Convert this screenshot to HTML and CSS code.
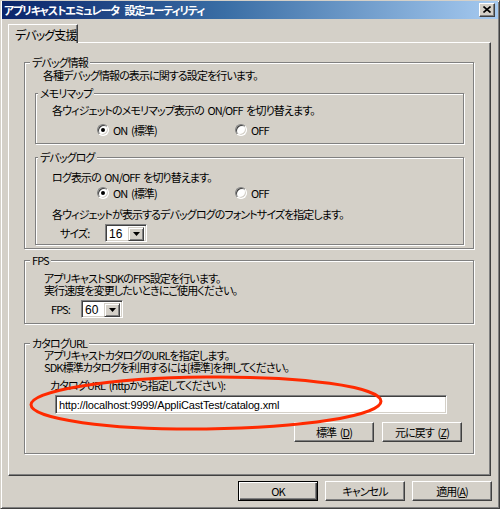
FILE: index.html
```html
<!DOCTYPE html>
<html lang="ja">
<head>
<meta charset="utf-8">
<title>アプリキャストエミュレータ 設定ユーティリティ</title>
<link rel="stylesheet" href="styles.css">
</head>
<body>
<div class="window">
  <div class="titlebar">
    <span class="title">アプリキャストエミュレータ 設定ユーティリティ</span>
    <span class="close"><svg width="8" height="7" viewBox="0 0 8 7"><path d="M0.5 0.5 L7.5 6.5 M7.5 0.5 L0.5 6.5" stroke="#000" stroke-width="1.6"/></svg></span>
  </div>
  <div class="client">
    <div class="tabs"><div class="tab">デバッグ支援</div></div>
    <div class="panel">
      <div class="group g-debug">
        <div class="legend lg-main">デバッグ情報</div>
        <div class="line desc">各種デバッグ情報の表示に関する設定を行います。</div>
        <div class="group sub g-mem">
          <div class="legend lg-sub">メモリマップ</div>
          <div class="line sub-text mem-text">各ウィジェットのメモリマップ表示の ON/OFF を切り替えます。</div>
          <div class="radios mem-radios">
            <div class="radio"><span class="rb checked"></span>ON (標準)</div>
            <div class="radio"><span class="rb"></span>OFF</div>
          </div>
        </div>
        <div class="group sub g-log">
          <div class="legend lg-sub">デバッグログ</div>
          <div class="line sub-text log-text">ログ表示の ON/OFF を切り替えます。</div>
          <div class="radios log-radios">
            <div class="radio"><span class="rb checked"></span>ON (標準)</div>
            <div class="radio"><span class="rb"></span>OFF</div>
          </div>
          <div class="line sub-text font-text">各ウィジェットが表示するデバッグログのフォントサイズを指定します。</div>
          <div class="field-row size-row">
            <span class="field-label size-label">サイズ:</span>
            <div class="combo"><span class="val">16</span><span class="drop"><svg width="7" height="4" viewBox="0 0 7 4"><path d="M0 0 H7 L3.5 4 Z" fill="#000"/></svg></span></div>
          </div>
        </div>
      </div>

      <div class="group g-fps">
        <div class="legend lg-main">FPS</div>
        <div class="line gtext first">アプリキャストSDKのFPS設定を行います。</div>
        <div class="line gtext">実行速度を変更したいときにご使用ください。</div>
        <div class="field-row fps-row">
          <span class="field-label fps-label">FPS:</span>
          <div class="combo"><span class="val">60</span><span class="drop"><svg width="7" height="4" viewBox="0 0 7 4"><path d="M0 0 H7 L3.5 4 Z" fill="#000"/></svg></span></div>
        </div>
      </div>

      <div class="group g-cat">
        <div class="legend lg-main">カタログURL</div>
        <div class="line gtext">アプリキャストカタログのURLを指定します。</div>
        <div class="line gtext">SDK標準カタログを利用するには[標準]を押してください。</div>
        <div class="line cat-label">カタログURL (httpから指定してください):</div>
        <div class="textbox">http://localhost:9999/AppliCastTest/catalog.xml</div>
        <div class="cat-buttons">
          <div class="btn">標準 (<u>D</u>)</div>
          <div class="btn">元に戻す (<u>Z</u>)</div>
        </div>
      </div>
    </div>
    <div class="dialog-buttons">
      <div class="btn default">OK</div>
      <div class="btn">キャンセル</div>
      <div class="btn">適用(<u>A</u>)</div>
    </div>
  </div>
  <svg class="mark" width="500" height="509" viewBox="0 0 500 509"><ellipse cx="206" cy="403" rx="175" ry="26" transform="rotate(-0.6 206 403)" fill="none" stroke="#ff2a00" stroke-width="3"/></svg>
</div>
</body>
</html>
```
FILE: styles.css
```css
html, body {
  margin: 0;
  padding: 0;
  background: #d4d0c8;
}
body {
  font-family: "Noto Sans CJK JP", "Noto Sans", sans-serif;
  font-size: 11px;
  line-height: 12px;
  letter-spacing: -0.9px;
  word-spacing: 2px;
  color: #000;
  font-feature-settings: "palt";
}
.window {
  position: relative;
  width: 500px;
  height: 509px;
  box-sizing: border-box;
  border: 1px solid;
  border-color: #d4d0c8 #404040 #404040 #d4d0c8;
  box-shadow: inset 1px 1px 0 #fff, inset -1px -1px 0 #808080;
  padding: 1px;
  background: #d4d0c8;
  overflow: hidden;
}
.titlebar {
  height: 18px;
  display: flex;
  align-items: center;
  justify-content: space-between;
  padding: 0 2px 0 2px;
  margin-top: -1px;
  background: linear-gradient(to right, #0a246a 0%, #3a6ea5 45%, #a6caf0 100%);
}
.title {
  color: #fff;
  font-weight: bold;
  font-size: 11px;
  letter-spacing: -1.1px;
  word-spacing: 4px;
  white-space: nowrap;
}
.close {
  width: 16px;
  height: 14px;
  box-sizing: border-box;
  background: #d4d0c8;
  border: 1px solid;
  border-color: #fff #404040 #404040 #fff;
  box-shadow: inset -1px -1px 0 #808080;
  display: flex;
  align-items: center;
  justify-content: center;
  padding: 0 1px 1px 0;
  margin-right: 1px;
}
.client {
  padding: 5px 7px 0 6px;
}
.tabs {
  display: flex;
  height: 18px;
  position: relative;
  z-index: 1;
}
.tab {
  width: 70px;
  height: 19px;
  box-sizing: border-box;
  border: 1px solid;
  border-bottom: none;
  border-color: #fff #404040 #fff #fff;
  box-shadow: inset -1px 0 0 #808080;
  background: #d4d0c8;
  padding: 4px 0 0 6px;
  white-space: nowrap;
  font-size: 12px;
}
.panel {
  border: 1px solid;
  border-color: #fff #404040 #404040 #fff;
  box-shadow: inset -1px -1px 0 #808080;
  padding: 19px 16px 21px 15px;
}
.group {
  border: 1px solid #808080;
  box-shadow: 1px 1px 0 #fff, inset 1px 1px 0 #fff;
  padding: 0;
}
.legend {
  width: fit-content;
  margin-top: -7px;
  padding: 0 2px;
  height: 12px;
  background: #d4d0c8;
  position: relative;
  white-space: nowrap;
}
.lg-main { margin-left: 5px; }
.lg-sub { margin-left: 2px; }
.line { height: 12px; white-space: nowrap; }

.g-debug { padding: 0 9px 3px 10px; }
.g-debug .lg-main { margin-left: -5px; }
.desc { margin: 1px 0 0 8px; }
.sub-text { margin-left: 16px; }
.g-mem { margin-top: 12px; padding-bottom: 7px; }
.mem-text { margin-top: 5px; }
.radios {
  display: grid;
  grid-template-columns: 138px auto;
  padding-left: 61px;
  height: 12px;
}
.radio { display: flex; align-items: center; gap: 4px; height: 12px; white-space: nowrap; }
.rb {
  width: 12px;
  height: 12px;
  box-sizing: border-box;
  border-radius: 50%;
  border: 1px solid;
  border-color: #808080 #fff #fff #808080;
  box-shadow: inset 1px 1px 0 #404040, inset -1px -1px 0 #d4d0c8;
  background: #fff;
  position: relative;
  flex: none;
}
.rb.checked::after {
  content: "";
  position: absolute;
  left: 3px;
  top: 3px;
  width: 4px;
  height: 4px;
  border-radius: 50%;
  background: #000;
}
.mem-radios { margin-top: 8px; }
.g-log { margin-top: 13px; padding-bottom: 2px; }
.log-text { margin-top: 8px; }
.log-radios { margin-top: 4px; }
.font-text { margin-top: 9px; }
.field-row { display: flex; align-items: center; }
.size-row { margin-top: 4px; padding-left: 24px; }
.size-label { width: 45px; }
.combo {
  width: 42px;
  height: 18px;
  box-sizing: border-box;
  border: 1px solid;
  border-color: #808080 #fff #fff #808080;
  box-shadow: inset 1px 1px 0 #404040, inset -1px -1px 0 #d4d0c8;
  background: #fff;
  display: flex;
  padding: 2px;
  font-family: "Liberation Sans", Arial, sans-serif;
  font-size: 12px;
  letter-spacing: 0;
}
.combo .val { flex: 1; line-height: 14px; padding-left: 1px; }
.combo .drop {
  width: 16px;
  height: 14px;
  box-sizing: border-box;
  background: #d4d0c8;
  border: 1px solid;
  border-color: #d4d0c8 #404040 #404040 #d4d0c8;
  box-shadow: inset 1px 1px 0 #fff, inset -1px -1px 0 #808080;
  display: flex;
  align-items: center;
  justify-content: center;
}
.g-fps { margin-top: 11px; padding: 0 0 5px 0; }
.gtext { margin-left: 19px; }
.gtext.first { margin-top: 6px; }
.fps-row { margin-top: 4px; padding-left: 26px; }
.fps-label { width: 30px; }
.g-cat { margin-top: 19px; padding: 0 0 11px 0; }
.cat-label { margin: 6px 0 0 25px; }
.textbox {
  margin: 4px 0 0 30px;
  width: 392px;
  height: 19px;
  box-sizing: border-box;
  border: 1px solid;
  border-color: #808080 #fff #fff #808080;
  box-shadow: inset 1px 1px 0 #404040, inset -1px -1px 0 #d4d0c8;
  background: #fff;
  padding: 2px 0 0 3px;
  font-family: "Liberation Sans", Arial, sans-serif;
  font-size: 11px;
  letter-spacing: -0.15px;
  word-spacing: 0;
  line-height: 14px;
  white-space: nowrap;
}
.cat-buttons {
  display: flex;
  justify-content: flex-end;
  gap: 8px;
  margin: 8px 11px 0 0;
}
.btn {
  width: 80px;
  height: 20px;
  box-sizing: border-box;
  border: 1px solid;
  border-color: #fff #404040 #404040 #fff;
  box-shadow: inset -1px -1px 0 #808080;
  display: flex;
  align-items: center;
  justify-content: center;
  background: #d4d0c8;
  white-space: nowrap;
}
.btn u { text-decoration: underline; }
.dialog-buttons {
  display: flex;
  justify-content: flex-end;
  gap: 7px;
  margin: 5px -1px 0 0;
}
.btn.default {
  border: 1px solid #000;
  box-shadow: inset 1px 1px 0 #fff, inset -1px -1px 0 #404040, inset -2px -2px 0 #808080;
}
.mark {
  position: absolute;
  left: -1px;
  top: -1px;
  pointer-events: none;
}
```
